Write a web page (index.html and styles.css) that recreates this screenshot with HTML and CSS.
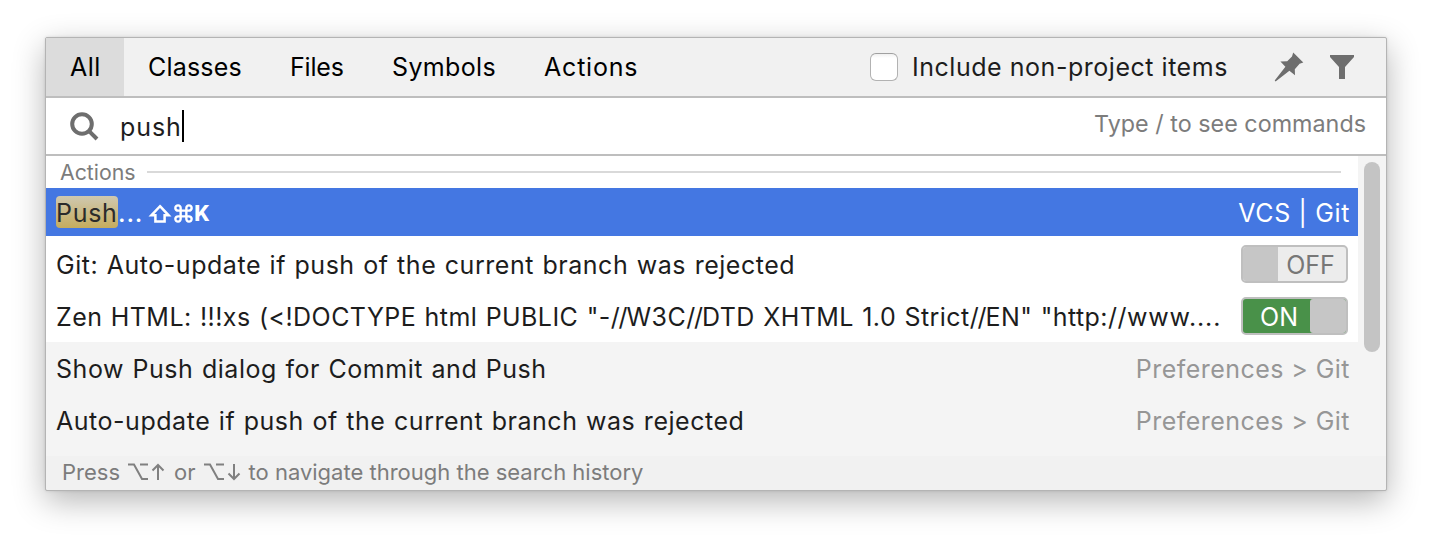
FILE: index.html
```html
<!DOCTYPE html>
<html lang="en">
<head>
<meta charset="utf-8">
<title>Search Everywhere</title>
<link rel="stylesheet" href="styles.css">
</head>
<body>
<main class="popup">
  <header class="tabs">
    <span class="tab tab-all active">All</span>
    <span class="tab tab-classes">Classes</span>
    <span class="tab tab-files">Files</span>
    <span class="tab tab-symbols">Symbols</span>
    <span class="tab tab-actions">Actions</span>
    <label class="include"><span class="checkbox"></span><span>Include non-project items</span></label>
    <svg class="pin" viewBox="0 0 30 30" width="30" height="30"><path d="M19.2 .5 29.3 10.6 25.6 11.8 20.8 17.2 21 23.2 15.4 18.8 1.6 29.4.7 28.6 11.4 14.8 6.4 9.6 13.2 9.3 18 4.4Z"/></svg>
    <svg class="funnel" viewBox="0 0 24 24" width="24" height="24"><path d="M0 0H24V2L15 12V24H9V12L0 2Z"/></svg>
  </header>
  <section class="search">
    <svg class="lens" viewBox="0 0 30 30" width="30" height="30"><circle cx="12" cy="12" r="9.8"/><path d="M18.6 18.6 27 27"/></svg>
    <span class="query">push</span><span class="caret"></span>
    <span class="hint">Type / to see commands</span>
  </section>
  <section class="results">
    <div class="list">
      <div class="group"><span>Actions</span><span class="rule"></span></div>
      <div class="row selected">
        <span class="match">Push</span><span class="dots">...</span>
        <span class="keys">
          <svg viewBox="0 0 24 20" width="24" height="20"><path d="M12 2.2 20.6 11.3H16.6V17.5H7.4V11.3H3.4Z"/></svg>
          <svg class="cmd" viewBox="0 0 20 20" width="19" height="19"><path d="M7 7H13V13H7ZM7 7H4.5A2.8 2.8 0 1 1 7 4.5ZM13 7V4.5A2.8 2.8 0 1 1 15.5 7ZM13 13H15.5A2.8 2.8 0 1 1 13 15.5ZM7 13V15.5A2.8 2.8 0 1 1 4.5 13Z"/></svg>
          <b>K</b>
        </span>
        <span class="side scope">VCS | Git</span>
      </div>
      <div class="row first"><span class="name">Git: Auto-update if push of the current branch was rejected</span>
        <span class="toggle off"><i></i><span>OFF</span></span></div>
      <div class="row"><span class="name template">Zen HTML: !!!xs (&lt;!DOCTYPE html PUBLIC "-<span class="slashes">//</span>W3C<span class="slashes">//</span>DTD XHTML 1.0 Strict<span class="slashes">//</span>EN" "http://<span class="host">www....</span></span>
        <span class="toggle on"><span>ON</span><i></i></span></div>
      <div class="row muted"><span class="name">Show Push dialog for Commit and Push</span><span class="side">Preferences &gt; Git</span></div>
      <div class="row muted"><span class="name">Auto-update if push of the current branch was rejected</span><span class="side">Preferences &gt; Git</span></div>
    </div>
    <div class="scrollbar"><div class="thumb"></div></div>
  </section>
  <footer class="footer">
    <span>Press</span>
    <svg class="opt" viewBox="0 0 20 18" width="20" height="18"><path d="M0 1.5H6L14 16H20M12 1.5H20"/></svg>
    <svg class="arrow" viewBox="0 0 14 18" width="14" height="18"><path d="M7 17V2M1.5 7.5 7 2 12.5 7.5"/></svg>
    <span>or</span>
    <svg class="opt" viewBox="0 0 20 18" width="20" height="18"><path d="M0 1.5H6L14 16H20M12 1.5H20"/></svg>
    <svg class="arrow last" viewBox="0 0 14 18" width="14" height="18"><path d="M7 1V16M1.5 10.5 7 16 12.5 10.5"/></svg>
    <span class="help">to navigate through the search history</span>
  </footer>
</main>
</body>
</html>
```
FILE: styles.css
```css
* { box-sizing: border-box; }
body { margin: 0; padding: 37px 45px; height: 544px; overflow: hidden; background: #fff; font: 25px/30px Inter, "Liberation Sans", sans-serif; color: #1d1d1d; white-space: nowrap; }
svg { flex: none; display: block; }
.popup { width: 1342px; height: 454px; border: 1px solid #b4b4b4; border-radius: 2px; background: #f1f1f1; background-clip: padding-box; box-shadow: 0 10px 32px rgba(0,0,0,.29), 0 0 3px rgba(0,0,0,.12); }
.tabs { height: 60px; display: flex; align-items: center; border-bottom: 2px solid #bebebe; color: #000; }
.tab { height: 58px; flex: none; display: flex; align-items: center; padding-left: 24px; }
.active { background: #dcdcdc; }
.tab-all { width: 78px; letter-spacing: .5px; }
.tab-classes { width: 142px; letter-spacing: .2px; }
.tab-files { width: 102px; letter-spacing: -.2px; }
.tab-symbols { width: 152px; letter-spacing: .35px; }
.tab-actions { width: 350px; letter-spacing: .8px; }
.include { display: flex; align-items: center; gap: 14px; width: 404px; color: #1d1d1d; letter-spacing: .53px; }
.checkbox { width: 28px; height: 28px; flex: none; border: 1px solid #b2b2b2; border-top-color: #a0a0a0; border-radius: 6px; background: linear-gradient(#f0f0f0, #fff 4px); }
.pin { margin-left: 0; fill: #6e6e6e; }
.funnel { margin: 0 0 0 26px; fill: #6e6e6e; }
.search { height: 58px; display: flex; align-items: center; padding: 0 20px 0 24px; background: #fff; border-bottom: 2px solid #bebebe; }
.lens { margin-top: 2px; fill: none; stroke: #6e6e6e; stroke-width: 4; }
.query { margin-left: 20px; padding-top: 2px; letter-spacing: .9px; }
.caret { width: 2px; height: 32px; background: #000; }
.hint { margin-left: auto; color: #7c7c7c; padding-bottom: 4px; font-size: 23.3px; letter-spacing: .02px; }
.results { height: 300px; display: flex; overflow: hidden; background: #f4f4f4; }
.list { width: 1312px; }
.group { height: 32px; display: flex; align-items: center; padding: 0 17px 0 14px; background: #fff; color: #7c7c7c; font-size: 21.3px; }
.rule { flex: 1; height: 2px; margin-left: 11px; background: #d9d9d9; }
.row { height: 52px; display: flex; align-items: center; padding: 0 8px 0 10px; background: #fff; }
.name { padding-top: 2px; letter-spacing: .53px; word-spacing: 1px; }
.template { letter-spacing: .44px; word-spacing: .9px; }
.slashes { letter-spacing: -1.1px; }
.host { letter-spacing: .85px; }
.selected { height: 48px; background: #4477e2; color: #fff; }
.first { height: 54px; padding-top: 2px; }
.muted { background: #f4f4f4; }
.side { margin-left: auto; padding-top: 2px; color: #969696; letter-spacing: .45px; }
.selected .side { color: #fff; }
.side.scope { letter-spacing: .65px; }
.match { width: 62px; height: 32px; line-height: 34px; border-radius: 4px; color: #2b2b2b; background: linear-gradient(#cfc8b0, #c6ac5d); letter-spacing: .7px; }
.dots { letter-spacing: .8px; padding-top: 2px; font-weight: 500; }
.keys { display: flex; align-items: center; margin-left: 5px; font-size: 21px; padding-top: 3px; }
.keys svg { fill: none; stroke: #fff; stroke-width: 2.5; }
.keys .cmd { margin: 0 0 0 2px; }
.keys b { margin-left: 1px; font-weight: 800; }
.toggle { margin: 0 2px 0 auto; width: 107px; height: 38px; flex: none; display: flex; border: 2px solid #bfbfbf; border-radius: 5px; overflow: hidden; line-height: 36px; text-align: center; }
.toggle i { width: 35px; background: #c6c6c6; }
.toggle span { flex: 1; }
.off { background: #ececec; color: #777; }
.off span { padding-right: 3px; }
.on { background: #499149; color: #fff; }
.on span { padding-left: 5px; }
.toggle.on i { width: 36px; border-radius: 3px 0 0 3px; }
.scrollbar { width: 28px; padding: 6px; }
.thumb { width: 16px; height: 190px; border-radius: 8px; background: #c4c4c4; }
.footer { height: 34px; display: flex; align-items: center; padding: 0 16px 2px; color: #7c7c7c; font-size: 22px; }
.opt, .arrow { fill: none; stroke: #808080; stroke-width: 2; }
.opt { margin-left: 8px; }
.arrow { margin: 0 9px 0 3px; }
.last { margin-right: 8px; }
.help { letter-spacing: 0; }
```
